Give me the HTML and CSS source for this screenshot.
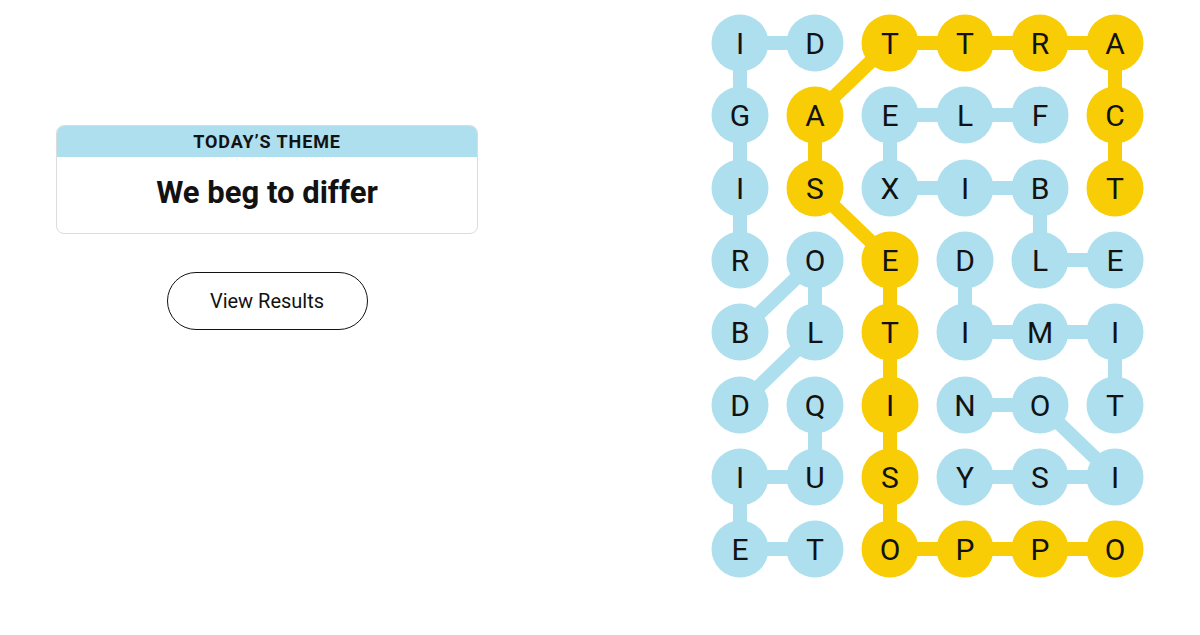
FILE: index.html
```html
<!DOCTYPE html>
<html lang="en">
<head>
<meta charset="utf-8">
<title>Strands</title>
<link rel="stylesheet" href="styles.css">
</head>
<body>
<main class="page">
  <section class="left">
    <div class="theme-card">
      <div class="theme-head">TODAY’S THEME</div>
      <div class="theme-body">We beg to differ</div>
    </div>
    <button class="results-btn">View Results</button>
  </section>
  <section class="board">
    <svg class="board-svg" width="433" height="564" viewBox="0 0 433 564">
      <g class="link blue">
        <line x1="29" y1="29" x2="104" y2="29"/>
        <line x1="29" y1="29" x2="29" y2="246"/>
        <line x1="179" y1="101" x2="329" y2="101"/>
        <line x1="179" y1="101" x2="179" y2="174"/>
        <line x1="179" y1="174" x2="329" y2="174"/>
        <line x1="329" y1="174" x2="329" y2="246"/>
        <line x1="329" y1="246" x2="404" y2="246"/>
        <line x1="254" y1="246" x2="254" y2="318"/>
        <line x1="254" y1="318" x2="404" y2="318"/>
        <line x1="404" y1="318" x2="404" y2="391"/>
        <line x1="254" y1="391" x2="329" y2="391"/>
        <line x1="329" y1="391" x2="404" y2="463"/>
        <line x1="254" y1="463" x2="404" y2="463"/>
        <line x1="104" y1="246" x2="29" y2="318"/>
        <line x1="104" y1="246" x2="104" y2="318"/>
        <line x1="104" y1="318" x2="29" y2="391"/>
        <line x1="104" y1="391" x2="104" y2="463"/>
        <line x1="29" y1="463" x2="104" y2="463"/>
        <line x1="29" y1="463" x2="29" y2="535"/>
        <line x1="29" y1="535" x2="104" y2="535"/>
      </g>
      <polyline class="link yellow" points="404,174 404,29 179,29 104,101 104,174 179,246 179,535 404,535"/>
      <g class="dots blue">
        <circle cx="29" cy="29" r="28.5"/><circle cx="104" cy="29" r="28.5"/>
        <circle cx="29" cy="101" r="28.5"/><circle cx="179" cy="101" r="28.5"/><circle cx="254" cy="101" r="28.5"/><circle cx="329" cy="101" r="28.5"/>
        <circle cx="29" cy="174" r="28.5"/><circle cx="179" cy="174" r="28.5"/><circle cx="254" cy="174" r="28.5"/><circle cx="329" cy="174" r="28.5"/>
        <circle cx="29" cy="246" r="28.5"/><circle cx="104" cy="246" r="28.5"/><circle cx="254" cy="246" r="28.5"/><circle cx="329" cy="246" r="28.5"/><circle cx="404" cy="246" r="28.5"/>
        <circle cx="29" cy="318" r="28.5"/><circle cx="104" cy="318" r="28.5"/><circle cx="254" cy="318" r="28.5"/><circle cx="329" cy="318" r="28.5"/><circle cx="404" cy="318" r="28.5"/>
        <circle cx="29" cy="391" r="28.5"/><circle cx="104" cy="391" r="28.5"/><circle cx="254" cy="391" r="28.5"/><circle cx="329" cy="391" r="28.5"/><circle cx="404" cy="391" r="28.5"/>
        <circle cx="29" cy="463" r="28.5"/><circle cx="104" cy="463" r="28.5"/><circle cx="254" cy="463" r="28.5"/><circle cx="329" cy="463" r="28.5"/><circle cx="404" cy="463" r="28.5"/>
        <circle cx="29" cy="535" r="28.5"/><circle cx="104" cy="535" r="28.5"/>
      </g>
      <g class="dots yellow">
        <circle cx="179" cy="29" r="28.5"/><circle cx="254" cy="29" r="28.5"/><circle cx="329" cy="29" r="28.5"/><circle cx="404" cy="29" r="28.5"/>
        <circle cx="104" cy="101" r="28.5"/><circle cx="404" cy="101" r="28.5"/>
        <circle cx="104" cy="174" r="28.5"/><circle cx="404" cy="174" r="28.5"/>
        <circle cx="179" cy="246" r="28.5"/>
        <circle cx="179" cy="318" r="28.5"/>
        <circle cx="179" cy="391" r="28.5"/>
        <circle cx="179" cy="463" r="28.5"/>
        <circle cx="179" cy="535" r="28.5"/><circle cx="254" cy="535" r="28.5"/><circle cx="329" cy="535" r="28.5"/><circle cx="404" cy="535" r="28.5"/>
      </g>
      <g class="letters">
        <text x="29" y="40">I</text><text x="104" y="40">D</text><text x="179" y="40">T</text><text x="254" y="40">T</text><text x="329" y="40">R</text><text x="404" y="40">A</text>
        <text x="29" y="112">G</text><text x="104" y="112">A</text><text x="179" y="112">E</text><text x="254" y="112">L</text><text x="329" y="112">F</text><text x="404" y="112">C</text>
        <text x="29" y="185">I</text><text x="104" y="185">S</text><text x="179" y="185">X</text><text x="254" y="185">I</text><text x="329" y="185">B</text><text x="404" y="185">T</text>
        <text x="29" y="257">R</text><text x="104" y="257">O</text><text x="179" y="257">E</text><text x="254" y="257">D</text><text x="329" y="257">L</text><text x="404" y="257">E</text>
        <text x="29" y="329">B</text><text x="104" y="329">L</text><text x="179" y="329">T</text><text x="254" y="329">I</text><text x="329" y="329">M</text><text x="404" y="329">I</text>
        <text x="29" y="402">D</text><text x="104" y="402">Q</text><text x="179" y="402">I</text><text x="254" y="402">N</text><text x="329" y="402">O</text><text x="404" y="402">T</text>
        <text x="29" y="474">I</text><text x="104" y="474">U</text><text x="179" y="474">S</text><text x="254" y="474">Y</text><text x="329" y="474">S</text><text x="404" y="474">I</text>
        <text x="29" y="546">E</text><text x="104" y="546">T</text><text x="179" y="546">O</text><text x="254" y="546">P</text><text x="329" y="546">P</text><text x="404" y="546">O</text>
      </g>
    </svg>
  </section>
</main>
</body>
</html>
```

FILE: styles.css
```css
html, body {
  margin: 0;
  padding: 0;
  background: #ffffff;
}

body {
  font-family: Roboto, "Liberation Sans", Arial, sans-serif;
  color: #121212;
}

.page {
  display: flex;
  align-items: flex-start;
  width: 1200px;
  height: 635px;
  overflow: hidden;
}

.left {
  display: flex;
  flex-direction: column;
  align-items: center;
  width: 422px;
  padding: 125px 0 0 56px;
}

.theme-card {
  width: 100%;
  box-sizing: border-box;
  border: 1px solid #dcdcdc;
  border-radius: 8px;
  overflow: hidden;
}

.theme-head {
  height: 31px;
  line-height: 32px;
  background: #aedfee;
  text-align: center;
  font-size: 18px;
  font-weight: 700;
  letter-spacing: 0.9px;
}

.theme-body {
  height: 76px;
  line-height: 72px;
  text-align: center;
  font-size: 31px;
  font-weight: 700;
  letter-spacing: 0;
}

.results-btn {
  margin-top: 38px;
  width: 201px;
  height: 58px;
  border: 1px solid #121212;
  border-radius: 29px;
  background: #ffffff;
  font-family: Roboto, "Liberation Sans", Arial, sans-serif;
  font-size: 20px;
  color: #121212;
  padding: 0;
}

.board {
  margin: 14px 0 0 233px;
}

.board-svg {
  display: block;
}

.link {
  fill: none;
  stroke-width: 14;
  stroke-linejoin: round;
}

.link.blue {
  stroke: #aedfee;
}

.link.yellow {
  stroke: #f8cd05;
}

.dots.blue {
  fill: #aedfee;
}

.dots.yellow {
  fill: #f8cd05;
}

.letters text {
  font-family: Roboto, "Liberation Sans", Arial, sans-serif;
  font-size: 30px;
  font-weight: 400;
  fill: #121212;
  text-anchor: middle;
}
```
